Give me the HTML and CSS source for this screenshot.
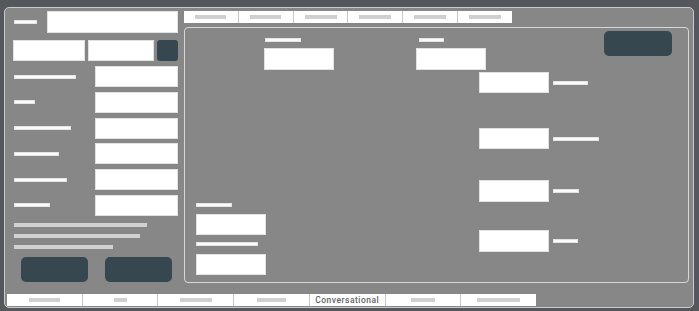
FILE: index.html
```html
<!DOCTYPE html>
<html lang="en">
<head>
<meta charset="utf-8">
<title>Wireframe</title>
<link rel="stylesheet" href="styles.css">
</head>
<body>
<div class="panel">
  <div class="top">
    <aside class="sidebar">
      <div class="row1">
        <span class="lbl w23"></span>
        <span class="input search"></span>
      </div>
      <div class="row2">
        <span class="input in72"></span>
        <span class="input in66"></span>
        <span class="btn-sq"></span>
      </div>
      <div class="form">
        <div class="frow"><span class="lbl w62"></span><span class="input fin"></span></div>
        <div class="frow"><span class="lbl w21"></span><span class="input fin"></span></div>
        <div class="frow"><span class="lbl w57"></span><span class="input fin"></span></div>
        <div class="frow"><span class="lbl w45"></span><span class="input fin"></span></div>
        <div class="frow"><span class="lbl w53"></span><span class="input fin"></span></div>
        <div class="frow"><span class="lbl w36"></span><span class="input fin"></span></div>
      </div>
      <div class="lines">
        <span class="line w133"></span>
        <span class="line w126"></span>
        <span class="line w99"></span>
      </div>
      <div class="actions">
        <span class="btn"></span>
        <span class="btn"></span>
      </div>
    </aside>
    <section class="maincol">
      <nav class="tabs">
        <div class="tab"><span class="ph w31"></span></div>
        <div class="tab"><span class="ph w31"></span></div>
        <div class="tab"><span class="ph w32"></span></div>
        <div class="tab"><span class="ph w32"></span></div>
        <div class="tab"><span class="ph w32"></span></div>
        <div class="tab"><span class="ph w32"></span></div>
      </nav>
      <div class="canvas">
        <div class="ctop">
          <div class="colB">
            <span class="lbl w36"></span>
            <span class="input cin"></span>
          </div>
          <div class="colC">
            <span class="lbl w25"></span>
            <span class="input cin"></span>
          </div>
          <span class="btn big"></span>
        </div>
        <div class="clow">
          <div class="colA">
            <span class="lbl w36"></span>
            <span class="input cin21"></span>
            <span class="lbl w62 gap"></span>
            <span class="input cin21"></span>
          </div>
          <div class="colD">
            <div class="ditem d1"><span class="input cin21"></span><span class="lbl w35"></span></div>
            <div class="ditem d2"><span class="input cin21"></span><span class="lbl w46"></span></div>
            <div class="ditem d3"><span class="input cin22"></span><span class="lbl w26"></span></div>
            <div class="ditem d4"><span class="input cin22"></span><span class="lbl w25"></span></div>
          </div>
        </div>
      </div>
    </section>
  </div>
  <nav class="btabs">
    <div class="btab"><span class="ph w31"></span></div>
    <div class="btab"><span class="ph w13"></span></div>
    <div class="btab"><span class="ph w32"></span></div>
    <div class="btab"><span class="ph w29"></span></div>
    <div class="btab"><span class="tabtext">Conversational</span></div>
    <div class="btab"><span class="ph w24"></span></div>
    <div class="btab"><span class="ph w43"></span></div>
  </nav>
</div>
</body>
</html>
```
FILE: styles.css
```css
* { box-sizing: border-box; }

html, body {
  margin: 0;
  height: 311px;
  overflow: hidden;
}

body {
  background: #54575b;
  padding: 7px 5px 3px 4px;
  font-family: Roboto, "Liberation Sans", sans-serif;
}

.panel {
  height: 301px;
  background: #868786;
  border: 1px solid #c9cac9;
  border-radius: 5px;
  display: flex;
  flex-direction: column;
}

.top {
  display: flex;
  padding-top: 3px;
}

/* generic pieces */
.input {
  display: block;
  background: #ffffff;
  border: 1px solid #e2e2e2;
}

.lbl {
  display: block;
  height: 4px;
  background: #fbfbfb;
  border: 1px solid #e4e4e4;
  flex: none;
}

.btn {
  display: block;
  background: #37474f;
  border-radius: 5px;
}

.ph {
  display: block;
  height: 4px;
  background: #d0d0d0;
}

/* widths */
.w13 { width: 13px; }
.w21 { width: 21px; }
.w23 { width: 23px; }
.w24 { width: 24px; }
.w25 { width: 25px; }
.w26 { width: 26px; }
.w29 { width: 29px; }
.w31 { width: 31px; }
.w32 { width: 32px; }
.w35 { width: 35px; }
.w36 { width: 36px; }
.w43 { width: 43px; }
.w45 { width: 45px; }
.w46 { width: 46px; }
.w53 { width: 53px; }
.w57 { width: 57px; }
.w62 { width: 62px; }
.w99 { width: 99px; }
.w126 { width: 126px; }
.w133 { width: 133px; }

/* sidebar */
.sidebar {
  margin-left: 8px;
  width: 165px;
  display: flex;
  flex-direction: column;
}

.row1 {
  display: flex;
  align-items: center;
  height: 22px;
}
.row1 .lbl { margin-left: 1px; }
.search {
  margin-left: auto;
  width: 131px;
  height: 22px;
}

.row2 {
  display: flex;
  gap: 3px;
  margin-top: 7px;
  height: 21px;
}
.in72 { width: 72px; height: 21px; }
.in66 { width: 66px; height: 21px; }
.btn-sq {
  display: block;
  width: 21px;
  height: 21px;
  background: #37474f;
  border-radius: 3px;
}

.form {
  display: flex;
  flex-direction: column;
  gap: 4.8px;
  margin-top: 5px;
}
.frow {
  display: flex;
  align-items: center;
  height: 21px;
}
.frow .lbl { margin-left: 1px; }
.fin {
  margin-left: auto;
  width: 83px;
  height: 21px;
}

.lines {
  display: flex;
  flex-direction: column;
  gap: 7px;
  margin-top: 7px;
  padding-left: 1px;
}
.line {
  display: block;
  height: 4px;
  background: #d0d1d0;
}

.actions {
  display: flex;
  gap: 17px;
  margin-top: 8px;
  padding-left: 8px;
}
.actions .btn {
  width: 67px;
  height: 25px;
}

/* main column */
.maincol {
  margin-left: 6px;
  width: 505px;
  display: flex;
  flex-direction: column;
}

.tabs {
  display: flex;
  width: 328px;
  height: 12px;
  background: #ffffff;
}
.tab {
  flex: 1;
  display: flex;
  align-items: center;
  justify-content: center;
  border-left: 1px solid #c8c8c8;
}
.tab:first-child { border-left: none; }

.canvas {
  margin-top: 4px;
  height: 256px;
  border: 1px solid #d7d7d7;
  border-radius: 4px;
  display: flex;
  flex-direction: column;
}

.ctop {
  display: flex;
  align-items: flex-start;
  height: 42px;
}
.colB {
  margin-left: 79px;
  margin-top: 10px;
  width: 70px;
}
.colB .lbl { margin-left: 1px; }
.colC {
  margin-left: 82px;
  margin-top: 10px;
  width: 70px;
}
.colC .lbl { margin-left: 3px; }
.cin {
  margin-top: 6px;
  width: 70px;
  height: 22px;
}
.btn.big {
  margin-left: auto;
  margin-right: 16px;
  margin-top: 3px;
  width: 68px;
  height: 25px;
}

.clow {
  display: flex;
  flex: 1;
  margin-top: 2px;
}
.colA {
  align-self: flex-end;
  margin-left: 11px;
  margin-bottom: 7px;
  width: 70px;
}
.colA .input { margin-top: 7px; }
.colA .lbl.gap { margin-top: 7px; }
.colA .input:last-child { margin-top: 8px; }
.cin21 { width: 70px; height: 21px; }
.cin22 { width: 70px; height: 22px; }

.colD {
  margin-left: 213px;
  display: flex;
  flex-direction: column;
}
.ditem {
  display: flex;
  align-items: center;
  gap: 4px;
}
.ditem .input { flex: none; }
.d2 { margin-top: 35px; }
.d3 { margin-top: 31px; }
.d4 { margin-top: 28px; }

/* bottom tabs */
.btabs {
  display: flex;
  margin-top: auto;
  margin-left: 2px;
  margin-bottom: 1px;
  width: 529px;
  height: 12px;
  background: #ffffff;
}
.btab {
  flex: 1;
  display: flex;
  align-items: center;
  justify-content: center;
  border-left: 1px solid #c8c8c8;
}
.btab:first-child { border-left: none; }
.tabtext {
  font-family: Roboto, "Liberation Sans", sans-serif;
  font-weight: 500;
  font-size: 8.5px;
  letter-spacing: 0.5px;
  line-height: 12px;
  color: #606366;
}
```
